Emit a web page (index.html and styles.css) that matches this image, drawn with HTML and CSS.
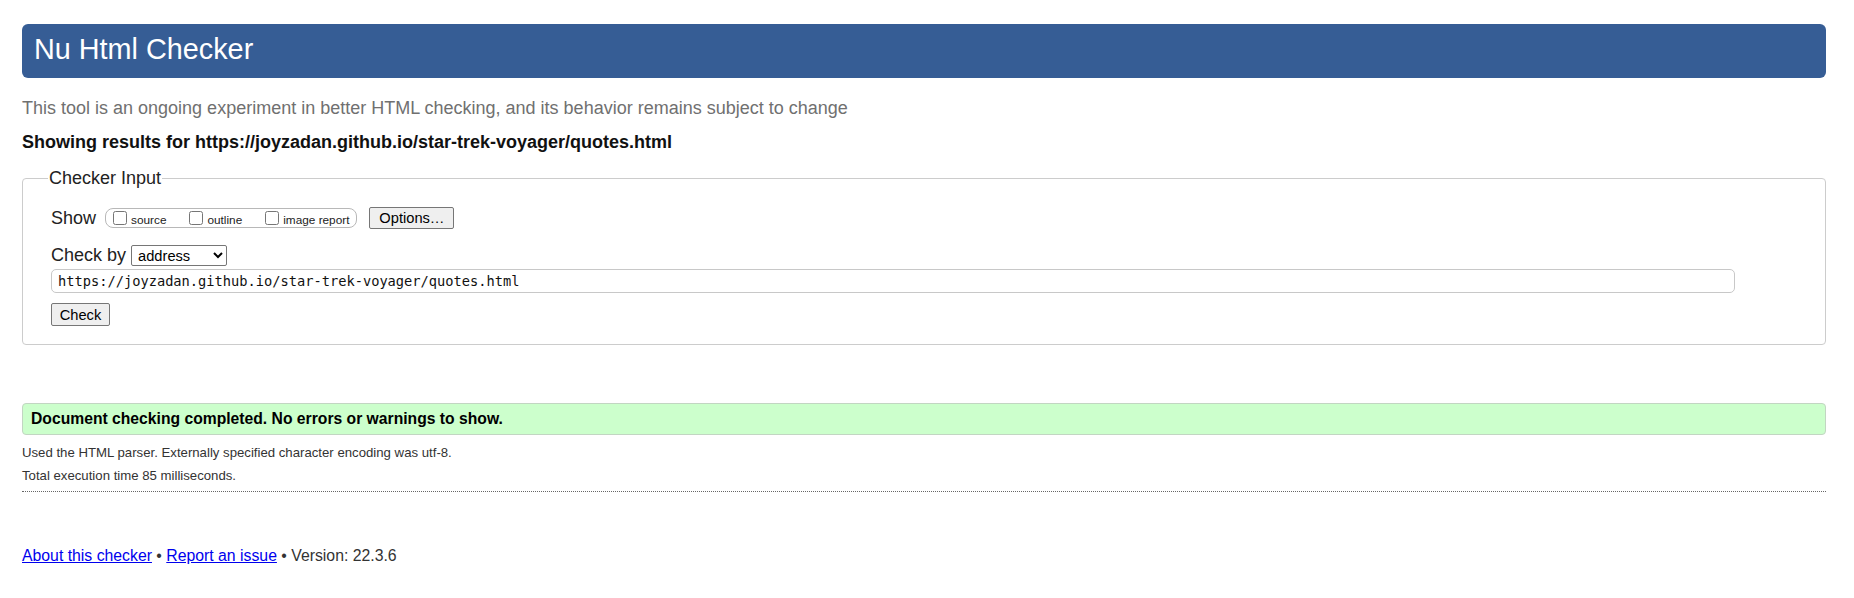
FILE: index.html
```html
<!DOCTYPE html>
<html lang="en">
<head>
<meta charset="utf-8">
<title>Nu Html Checker</title>
<link rel="stylesheet" href="styles.css">
</head>
<body>
<h1 class="title">Nu Html Checker</h1>
<p class="sub">This tool is an ongoing experiment in better HTML checking, and its behavior remains subject to change</p>
<p class="showing">Showing results for https://joyzadan.github.io/star-trek-voyager/quotes.html</p>
<fieldset class="checker">
  <legend class="legend">Checker Input</legend>
  <div class="show-row">
    <span class="show-lbl">Show</span>
    <span class="opts">
      <label class="opt"><input type="checkbox" class="cb"><span>source</span></label>
      <label class="opt"><input type="checkbox" class="cb"><span>outline</span></label>
      <label class="opt"><input type="checkbox" class="cb"><span>image report</span></label>
    </span>
    <button class="btn btn-options" type="button">Options…</button>
  </div>
  <div class="by-row">
    <span class="by-lbl">Check by</span>
    <select class="sel"><option>address</option></select>
  </div>
  <div class="url">https://joyzadan.github.io/star-trek-voyager/quotes.html</div>
  <button class="btn btn-check" type="button">Check</button>
</fieldset>
<div class="success">Document checking completed. No errors or warnings to show.</div>
<div class="details">
  <p class="detail">Used the HTML parser. Externally specified character encoding was utf-8.</p>
  <p class="detail">Total execution time 85 milliseconds.</p>
</div>
<p class="footer"><a href="#" class="link">About this checker</a> • <a href="#" class="link">Report an issue</a> • Version: 22.3.6</p>
</body>
</html>
```
FILE: styles.css
```css
html, body {
  background: #ffffff;
}
body {
  margin: 0;
  padding: 0 28px 0 22px;
  font-family: "Liberation Sans", Arial, sans-serif;
  font-size: 18px;
  color: #000;
}
.title {
  margin: 24px 0 0;
  height: 51px;
  padding: 0 12px 3px;
  line-height: 51px;
  background: #365d95;
  color: #ffffff;
  font-size: 28.8px;
  font-weight: normal;
  border-radius: 6px;
}
.sub {
  margin: 20px 0 0;
  line-height: 20px;
  color: #707070;
}
.showing {
  margin: 14px 0 0;
  line-height: 20px;
  font-weight: bold;
  color: #111;
}
.checker {
  margin: 16px 0 0;
  padding: 0 90px 18px 28px;
  border: 1px solid #cccccc;
  border-radius: 4px;
  min-width: 0;
}
.legend {
  padding: 0 1px;
  margin-left: -3px;
  line-height: 20px;
  color: #222;
}
.show-row {
  display: flex;
  align-items: center;
  margin-top: 19px;
  height: 22px;
}
.show-lbl {
  margin-right: 9px;
  color: #222;
}
.opts {
  display: flex;
  align-items: flex-end;
  height: 18px;
  padding: 0 7px 0 7px;
  border: 1px solid #b8b8b8;
  border-radius: 8px;
}
.opt {
  display: flex;
  align-items: flex-end;
  margin-right: 23px;
  font-size: 11.8px;
  line-height: 14px;
  color: #222;
}
.opt:last-child {
  margin-right: 0;
}
.cb {
  width: 14px;
  height: 14px;
  margin: 0 4px 2px 0;
}
.btn {
  font-family: "Liberation Sans", Arial, sans-serif;
  font-size: 14.67px;
  color: #000;
  background: #efefef;
  border: 1px solid #767676;
  border-radius: 2px;
  padding: 0;
}
.btn-options {
  margin-left: 12px;
  width: 85px;
  height: 22px;
}
.by-row {
  display: flex;
  align-items: center;
  margin-top: 16px;
  height: 21px;
}
.by-lbl {
  margin-right: 5px;
  color: #222;
}
.sel {
  width: 96px;
  height: 21px;
  font-family: "Liberation Sans", Arial, sans-serif;
  font-size: 14.67px;
  color: #000;
  border: 1px solid #767676;
  border-radius: 2px;
  background: #fff;
  padding: 0 0 0 2px;
}
.url {
  margin-top: 3px;
  height: 22px;
  line-height: 22px;
  padding: 0 6px;
  border: 1px solid #c8c8c8;
  border-radius: 5px;
  font-family: "DejaVu Sans Mono", "Liberation Mono", monospace;
  font-size: 13.7px;
  color: #111;
}
.btn-check {
  display: block;
  margin-top: 10px;
  width: 59px;
  height: 23px;
}
.success {
  margin-top: 58px;
  height: 30px;
  line-height: 30px;
  padding: 0 8px;
  background: #ccffcc;
  border: 1px solid #c2d6c2;
  border-radius: 4px;
  font-weight: bold;
  font-size: 15.7px;
  color: #000;
}
.details {
  margin-top: 6px;
  padding-bottom: 4px;
  border-bottom: 1px dotted #666;
}
.detail {
  margin: 0;
  line-height: 23px;
  font-size: 13.2px;
  color: #333;
}
.footer {
  margin: 54px 0 0;
  line-height: 20px;
  font-size: 15.8px;
  color: #333;
}
.link {
  color: #0000ee;
}
```
